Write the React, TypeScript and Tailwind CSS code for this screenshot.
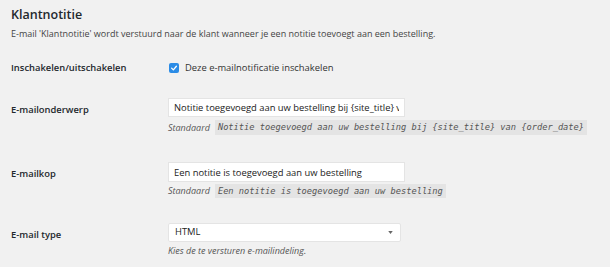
import React from "react";

const sans = { fontFamily: '"Open Sans", "Noto Sans", sans-serif' };
const mono = { fontFamily: '"DejaVu Sans Mono", monospace' };

export default function App() {
  return (
    <div className="w-[610px] h-[267px] bg-[#f1f1f1] text-[#23282d] overflow-hidden pl-[11px]" style={sans}>
      <div className="pt-[6px] text-[12.5px] leading-[18px] font-semibold text-[#23282d]">Klantnotitie</div>
      <div className="mt-[4px] text-[9px] leading-[12px] text-[#444]">
        E-mail 'Klantnotitie' wordt verstuurd naar de klant wanneer je een notitie toevoegt aan een bestelling.
      </div>

      <div className="flex mt-[21px] items-center h-[14px]">
        <div className="w-[157px] text-[9.4px] font-semibold">Inschakelen/uitschakelen</div>
        <div className="flex items-center gap-[6px]">
          <span className="w-[10px] h-[10px] rounded-[2px] bg-[#2b8ce6] flex items-center justify-center ml-[1px]">
            <svg viewBox="0 0 10 10" className="w-[8px] h-[8px]">
              <path d="M2 5.2 L4.2 7.3 L8 2.8" stroke="white" strokeWidth="1.6" fill="none" strokeLinecap="round" strokeLinejoin="round" />
            </svg>
          </span>
          <span className="text-[9.4px] text-[#333]">Deze e-mailnotificatie inschakelen</span>
        </div>
      </div>

      <div className="flex mt-[23px]">
        <div className="w-[157px] text-[9.4px] font-semibold pt-[5px]">E-mailonderwerp</div>
        <div>
          <input
            readOnly
            value="Notitie toegevoegd aan uw bestelling bij {site_title} van {order_date}"
            className="block w-[237px] h-[19px] bg-white border border-[#e4e4e4] px-[5px] text-[9.4px] text-[#222] outline-none"
            style={sans}
          />
          <div className="flex items-center mt-[3px] text-[9px] italic text-[#555]">
            <span className="mr-[5px]">Standaard</span>
            <code className="bg-[#e4e4e4] px-[3px] h-[15px] leading-[15px] text-[8.7px] italic text-[#555]" style={mono}>
              Notitie toegevoegd aan uw bestelling bij {"{site_title}"} van {"{order_date}"}
            </code>
          </div>
        </div>
      </div>

      <div className="flex mt-[27px]">
        <div className="w-[157px] text-[9.4px] font-semibold pt-[5px]">E-mailkop</div>
        <div>
          <input
            readOnly
            value="Een notitie is toegevoegd aan uw bestelling"
            className="block w-[237px] h-[20px] bg-white border border-[#e4e4e4] px-[5px] text-[9.4px] text-[#222] outline-none"
            style={sans}
          />
          <div className="flex items-center mt-[2px] text-[9px] italic text-[#555]">
            <span className="mr-[5px]">Standaard</span>
            <code className="bg-[#e4e4e4] px-[3px] h-[14px] leading-[14px] text-[8.7px] italic text-[#555]" style={mono}>
              Een notitie is toegevoegd aan uw bestelling
            </code>
          </div>
        </div>
      </div>

      <div className="flex mt-[25px]">
        <div className="w-[157px] text-[9.4px] font-semibold pt-[5px]">E-mail type</div>
        <div>
          <div className="w-[233px] h-[19px] bg-white border border-[#e4e4e4] rounded-[2px] pl-[6px] pr-[7px] flex items-center justify-between text-[9.4px] text-[#222]">
            <span>HTML</span>
            <svg viewBox="0 0 6 4" className="w-[5px] h-[3px]"><path d="M0 0 L6 0 L3 4 Z" fill="#666" /></svg>
          </div>
          <div className="mt-[2px] text-[9px] italic text-[#555]">Kies de te versturen e-mailindeling.</div>
        </div>
      </div>
    </div>
  );
}
